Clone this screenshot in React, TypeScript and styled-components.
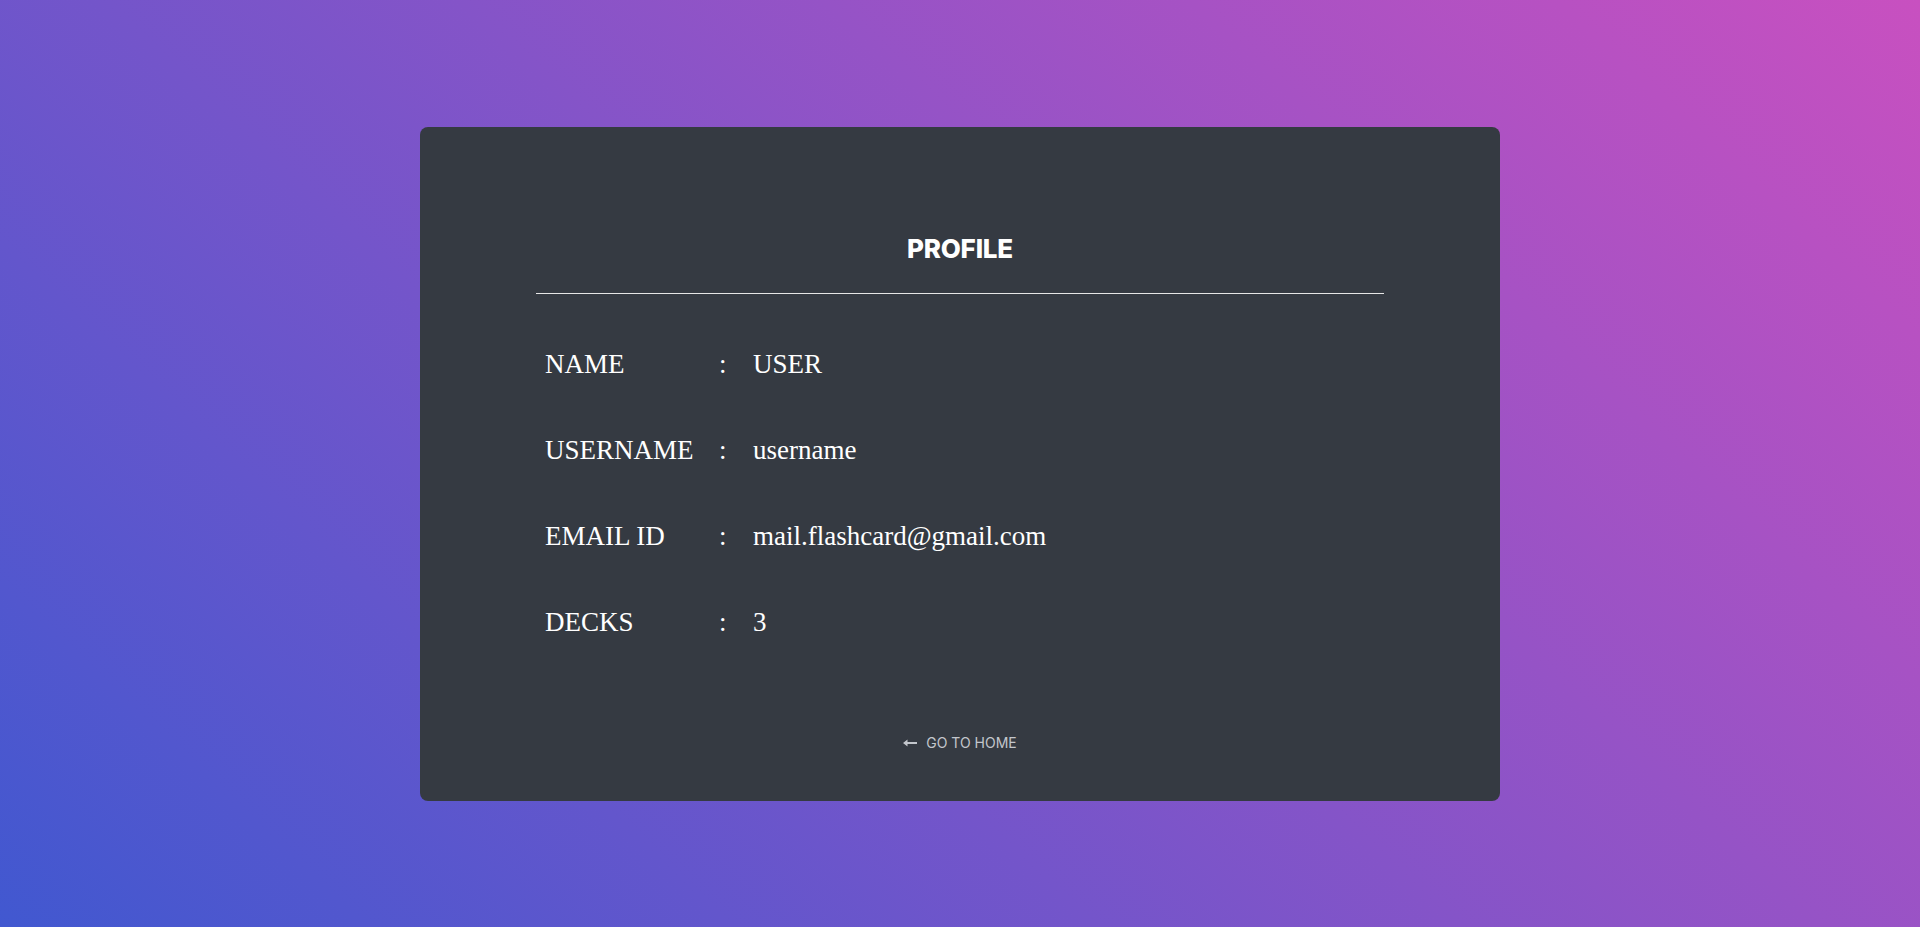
import React from 'react';
import styled, { createGlobalStyle } from 'styled-components';

interface IProfileField {
  label: string;
  value: string;
}

const GlobalStyle = createGlobalStyle`
  html, body, #root {
    margin: 0;
    padding: 0;
    height: 100%;
  }
  body {
    font-family: "Liberation Serif", "Times New Roman", serif;
  }
`;

const StyledPage = styled.div`
  display: flex;
  align-items: center;
  justify-content: center;
  width: 100%;
  height: 100vh;
  background: linear-gradient(43deg, #4158d0 0%, #c850c0 100%);
`;

const StyledCard = styled.div`
  display: flex;
  flex-direction: column;
  box-sizing: border-box;
  width: 1080px;
  height: 674px;
  padding: 105px 116px 48px;
  background-color: #353a42;
  border-radius: 8px;
  color: #ffffff;
`;

const StyledTitle = styled.h2`
  margin: 0;
  font-family: Inter, "Noto Sans", sans-serif;
  font-weight: 800;
  font-size: 26px;
  line-height: 34px;
  text-align: center;
  letter-spacing: -0.2px;
`;

const StyledDivider = styled.hr`
  margin: 27px 0 0;
  border: none;
  border-top: 1px solid #e6e6e6;
`;

const StyledFields = styled.div`
  display: flex;
  flex-direction: column;
  gap: 54px;
  margin-top: 54px;
  padding-left: 9px;
`;

const StyledField = styled.div`
  display: grid;
  grid-template-columns: 174px 34px 1fr;
  font-size: 27px;
  line-height: 32px;
`;

const StyledHomeLink = styled.a`
  display: flex;
  align-items: center;
  justify-content: center;
  gap: 9px;
  margin-top: auto;
  font-family: Inter, "Noto Sans", sans-serif;
  font-size: 14px;
  line-height: 20px;
  color: #c3c6cc;
  text-decoration: none;
  text-transform: uppercase;
  cursor: pointer;
`;

const fields: IProfileField[] = [
  { label: 'NAME', value: 'USER' },
  { label: 'USERNAME', value: 'username' },
  { label: 'EMAIL ID', value: 'mail.flashcard@gmail.com' },
  { label: 'DECKS', value: '3' },
];

const ArrowLeft = () => (
  <svg width="14" height="8" viewBox="0 0 14 8">
    <path d="M0 4 L4.5 0.5 L4.5 3 L14 3 L14 5 L4.5 5 L4.5 7.5 Z" fill="#c3c6cc" />
  </svg>
);

/**
 * Profile page showing the user's details.
 */
const App = () => {
  return <>
    <GlobalStyle />
    <StyledPage>
      <StyledCard>
        <StyledTitle>PROFILE</StyledTitle>
        <StyledDivider />
        <StyledFields>
          {fields.map((f) => {
            return <StyledField key={f.label}>
              <span>{f.label}</span>
              <span>:</span>
              <span>{f.value}</span>
            </StyledField>
          })}
        </StyledFields>
        <StyledHomeLink><ArrowLeft />Go to home</StyledHomeLink>
      </StyledCard>
    </StyledPage>
  </>
}

export default App
